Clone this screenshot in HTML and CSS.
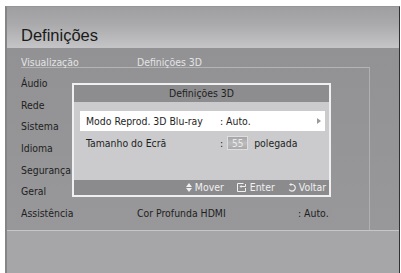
FILE: index.html
```html
<!DOCTYPE html>
<html lang="pt">
<head>
<meta charset="utf-8">
<title>Definições</title>
<link rel="stylesheet" href="styles.css">
</head>
<body>
<div class="screen">
  <header class="hdr"><h1 class="title">Definições</h1></header>
  <main class="main">
    <div class="row1"><span class="c1 light">Visualização</span><span class="c2 light">Definições 3D</span></div>
    <div class="panel">
      <div class="row"><span class="c1">Áudio</span></div>
      <div class="row"><span class="c1">Rede</span></div>
      <div class="row"><span class="c1">Sistema</span></div>
      <div class="row"><span class="c1">Idioma</span></div>
      <div class="row"><span class="c1">Segurança</span></div>
      <div class="row"><span class="c1">Geral</span></div>
      <div class="row"><span class="c1">Assistência</span><span class="c2">Cor Profunda HDMI</span><span class="c3">: Auto.</span></div>
    </div>
  </main>
  <div class="bottom"></div>

  <div class="dialog">
    <div class="dlg-title">Definições 3D</div>
    <div class="dlg-body">
      <div class="opt sel"><span class="lbl">Modo Reprod. 3D Blu-ray</span><span class="val">: Auto.</span>
        <svg class="arrow" width="4" height="6" viewBox="0 0 4 6"><polygon points="0,0 4,3 0,6" fill="#9a9a9a"/></svg>
      </div>
      <div class="opt"><span class="lbl">Tamanho do Ecrã</span><span class="val">:<span class="box">55</span><span class="unit">polegada</span></span></div>
    </div>
    <div class="dlg-foot">
      <span class="key"><svg width="6" height="9" viewBox="0 0 6 9"><polygon points="0,4 3,0 6,4" fill="#f0f0f0"/><polygon points="0,5 3,9 6,5" fill="#f0f0f0"/></svg>Mover</span>
      <span class="key"><svg width="10" height="9" viewBox="0 0 10 9"><path d="M6.5 0.5 H0.5 V8.5 H8.5 V5" fill="none" stroke="#f0f0f0" stroke-width="1"/><path d="M8.5 1 V3.5 H4" fill="none" stroke="#f0f0f0" stroke-width="1"/><polygon points="2.5,3.5 4.5,2 4.5,5" fill="#f0f0f0"/></svg>Enter</span>
      <span class="key"><svg width="8" height="9" viewBox="0 0 8 9"><path d="M3 1.5 H4 A3.3 3.3 0 1 1 1.2 6.6" fill="none" stroke="#f0f0f0" stroke-width="1.1"/><polygon points="1,1.5 3.4,0 3.4,3" fill="#f0f0f0"/></svg>Voltar</span>
    </div>
  </div>
</div>
</body>
</html>
```
FILE: styles.css
```css
html, body {
  margin: 0;
  padding: 0;
  background: #ffffff;
}
body {
  font-family: "DejaVu Sans Condensed", "DejaVu Sans", sans-serif;
  font-stretch: semi-condensed;
  font-size: 10.4px;
  color: #1e1e1e;
  overflow: hidden;
}
.screen {
  position: relative;
  margin: 6px 1px 0 5px;
  height: 267px;
  box-sizing: border-box;
  border-left: 2px solid #858587;
  border-top: 1px solid #959597;
  border-right: 1px solid #303032;
  background: #959597;
  box-shadow: inset -4px 0 0 #9b9b9d, inset -5px 0 0 #bcbcbe;
  display: flex;
  flex-direction: column;
}
.hdr {
  height: 41px;
  box-sizing: border-box;
  padding: 20px 0 0 14px;
  background: linear-gradient(#9f9fa1, #a9a9ab 40%, #c5c5c7);
}
.title {
  margin: 0;
  font-family: "Liberation Sans", Arial, sans-serif;
  font-stretch: normal;
  font-weight: normal;
  font-size: 16.5px;
  line-height: 17px;
  color: #1a1a1a;
}
.main {
  height: 182px;
  background: linear-gradient(#929294, #98989a);
}
.row1 {
  height: 19px;
  margin-left: 14px;
  display: flex;
  align-items: flex-end;
}
.row1 span {
  line-height: 10px;
}
.c1 { width: 116px; flex: none; }
.c2 { width: 161px; flex: none; }
.c3 { flex: none; }
.light { color: #e4e4e6; }
.panel {
  margin-left: 14px;
  width: 349px;
  box-sizing: border-box;
  border-top: 1px solid #b4b4b6;
  border-right: 1px solid #b0b0b2;
  padding: 5px 0;
}
.row {
  height: 21.7px;
  line-height: 21.7px;
  display: flex;
}
.bottom {
  flex: 1;
  border-top: 1px solid #c6c6c8;
  background: #a6a6a8;
}
.dialog {
  position: absolute;
  left: 65px;
  top: 76px;
  width: 259px;
  height: 114px;
  box-sizing: border-box;
  border: 2px solid #f0f0f0;
  display: flex;
  flex-direction: column;
}
.dlg-title {
  height: 17px;
  line-height: 17px;
  text-align: center;
  background: #8d8d8f;
  color: #1e1e1e;
}
.dlg-body {
  height: 78px;
  box-sizing: border-box;
  padding: 9px 4px 0 6px;
  background: #cbcbcd;
  display: flex;
  flex-direction: column;
  gap: 2px;
}
.opt {
  height: 20px;
  line-height: 20px;
  padding-left: 6px;
  display: flex;
  align-items: center;
}
.sel { background: #ffffff; }
.lbl { width: 134px; flex: none; }
.val { flex: 1; display: flex; align-items: center; }
.arrow { margin-right: 4px; }
.box {
  display: inline-block;
  width: 21px;
  height: 14px;
  line-height: 13px;
  margin-left: 4px;
  box-sizing: border-box;
  border: 1px solid #dedede;
  background: linear-gradient(#a5a5a7, #bdbdbf 50%, #a9a9ab);
  color: #eaeaea;
  text-align: center;
  font-size: 10px;
}
.unit { margin-left: 6px; }
.dlg-foot {
  height: 15px;
  background: #8b8b8d;
  color: #f0f0f0;
  display: flex;
  justify-content: flex-end;
  align-items: center;
  gap: 13px;
  padding-right: 3px;
}
.key {
  display: flex;
  align-items: center;
  gap: 3px;
  line-height: 15px;
}
```
